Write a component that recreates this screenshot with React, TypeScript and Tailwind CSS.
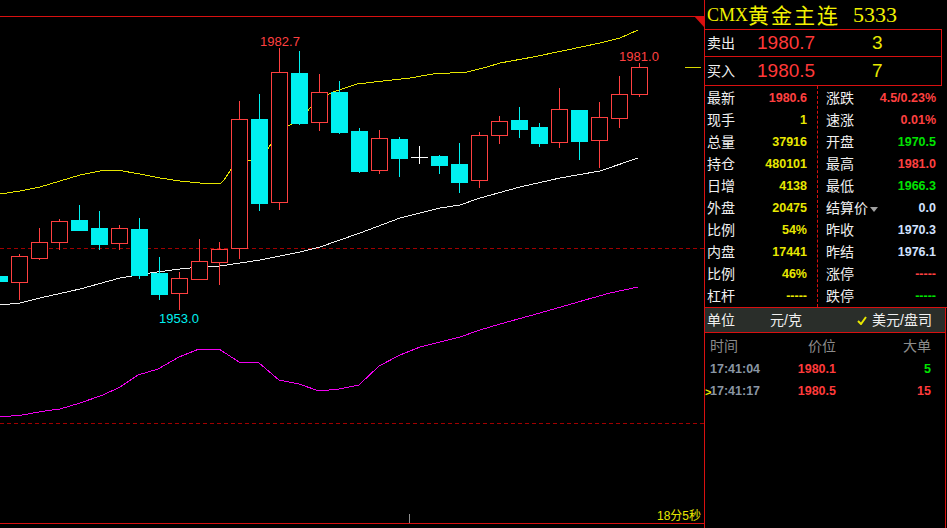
import React from 'react';

type Kind = 'r' | 'c' | 'x';

const RED = '#ff4040';
const CYAN = '#00f0f0';
const YEL = '#e8e800';
const GRN = '#00e400';
const BLU = '#d2e2ff';

// [bodyTop, bodyBottom, high, low, kind] in page pixels
const candles: [number, number, number, number, Kind][] = [
  [276, 281, 276, 282, 'c'],
  [256, 282, 254, 300, 'r'],
  [242, 258, 228, 260, 'r'],
  [221, 242, 219, 250, 'r'],
  [220, 230, 205, 230, 'c'],
  [228, 244, 211, 250, 'c'],
  [228, 243, 225, 250, 'r'],
  [229, 275, 218, 279, 'c'],
  [273, 294, 257, 300, 'c'],
  [278, 293, 272, 310, 'r'],
  [261, 279, 239, 279, 'r'],
  [249, 262, 242, 285, 'r'],
  [119, 248, 101, 259, 'r'],
  [119, 203, 94, 211, 'c'],
  [72, 202, 48, 210, 'r'],
  [73, 123, 51, 125, 'c'],
  [92, 122, 74, 131, 'r'],
  [92, 132, 81, 134, 'c'],
  [131, 171, 128, 173, 'c'],
  [138, 170, 130, 174, 'r'],
  [139, 158, 137, 177, 'c'],
  [157, 157, 146, 164, 'x'],
  [156, 165, 155, 174, 'c'],
  [164, 182, 143, 193, 'c'],
  [135, 180, 132, 188, 'r'],
  [121, 135, 116, 144, 'r'],
  [120, 129, 107, 138, 'c'],
  [127, 143, 123, 147, 'c'],
  [109, 142, 88, 148, 'r'],
  [110, 141, 110, 160, 'c'],
  [117, 140, 102, 168, 'r'],
  [94, 118, 76, 128, 'r'],
  [67, 94, 63, 97, 'r'],
];

const upper = [
  [0, 194], [20, 191], [40, 187], [60, 181], [80, 175], [100, 171], [117, 170], [140, 174],
  [160, 178], [180, 181], [200, 183], [220, 184], [224, 180], [232, 168], [237, 163], [247, 161],
  [258, 158], [267, 150], [280, 131], [290, 125], [300, 120], [310, 108], [320, 98], [333, 92],
  [357, 84], [383, 81], [410, 78], [433, 74], [467, 72], [487, 67], [500, 63], [533, 57],
  [567, 50], [600, 43], [620, 38], [638, 30],
];

const lower = [
  [0, 305], [20, 303], [40, 298], [80, 289], [120, 278], [150, 273], [180, 269], [200, 267],
  [220, 266], [240, 263], [260, 260], [290, 254], [300, 252], [320, 247], [360, 233], [400, 218],
  [440, 208], [460, 205], [480, 198], [520, 187], [560, 178], [600, 171], [638, 158],
];

const osc = [
  [0, 417], [22, 415], [45, 411], [60, 409], [80, 403], [103, 395], [120, 387], [138, 375],
  [158, 369], [179, 357], [199, 349], [219, 349], [239, 362], [259, 363], [279, 380], [299, 384],
  [319, 391], [339, 389], [359, 385], [379, 366], [400, 355], [420, 347], [440, 342], [460, 337],
  [480, 330], [500, 324], [540, 313], [585, 300], [610, 293], [638, 287],
];

const pts = (p: number[][]) => p.map((q) => q.join(',')).join(' ');

const leftStats: [string, string, string][] = [
  ['最新', '1980.6', RED],
  ['现手', '1', YEL],
  ['总量', '37916', YEL],
  ['持仓', '480101', YEL],
  ['日增', '4138', YEL],
  ['外盘', '20475', YEL],
  ['比例', '54%', YEL],
  ['内盘', '17441', YEL],
  ['比例', '46%', YEL],
  ['杠杆', '-----', YEL],
];

const rightStats: [string, string, string][] = [
  ['涨跌', '4.5/0.23%', RED],
  ['速涨', '0.01%', RED],
  ['开盘', '1970.5', GRN],
  ['最高', '1981.0', RED],
  ['最低', '1966.3', GRN],
  ['结算价', '0.0', BLU],
  ['昨收', '1970.3', BLU],
  ['昨结', '1976.1', BLU],
  ['涨停', '-----', RED],
  ['跌停', '-----', GRN],
];

function Chart() {
  return (
    <svg width={704} height={506} viewBox="0 17 704 506" className="block">
      <g shapeRendering="crispEdges">
        <line x1={0} x2={704} y1={248.5} y2={248.5} stroke="#a00000" strokeDasharray="4 3" />
        <line x1={0} x2={704} y1={423.5} y2={423.5} stroke="#a00000" strokeDasharray="4 3" />
        <polyline points={pts(upper)} fill="none" stroke="#e6e600" />
        <polyline points={pts(lower)} fill="none" stroke="#f0f0f0" />
        <polyline points={pts(osc)} fill="none" stroke="#f000f0" />
        <line x1={685} x2={701} y1={67.5} y2={67.5} stroke="#d8d800" />
        <line x1={409.5} x2={409.5} y1={514} y2={523} stroke="#909090" />
        {candles.map(([top, bot, hi, lo, kind], i) => {
          const left = -9 + i * 20;
          const cx = left + 8.5;
          if (kind === 'x') {
            return (
              <g key={i} stroke="#ffffff">
                <line x1={left} x2={left + 17} y1={top + 0.5} y2={top + 0.5} />
                <line x1={cx} x2={cx} y1={hi} y2={lo} />
              </g>
            );
          }
          const color = kind === 'r' ? RED : CYAN;
          return (
            <g key={i}>
              <line x1={cx} x2={cx} y1={hi} y2={lo} stroke={color} />
              {kind === 'r' ? (
                <rect x={left + 0.5} y={top + 0.5} width={16} height={bot - top} fill="#000" stroke={color} />
              ) : (
                <rect x={left} y={top} width={17} height={bot - top + 1} fill={color} />
              )}
            </g>
          );
        })}
      </g>
      <g fontFamily="'Liberation Sans', sans-serif" fontSize={13} textAnchor="middle">
        <text x={280} y={46} fill={RED}>1982.7</text>
        <text x={639} y={61} fill={RED}>1981.0</text>
        <text x={179} y={323} fill={CYAN}>1953.0</text>
      </g>
      <text
        x={701}
        y={520}
        textAnchor="end"
        fontSize={12}
        fill="#e8e800"
        fontFamily="'Liberation Sans', 'Noto Sans CJK SC', sans-serif"
      >
        18分5秒
      </text>
    </svg>
  );
}

function StatRow({ label, value, color, pl, pr, arrow }: { label: string; value: string; color: string; pl: string; pr: string; arrow?: boolean }) {
  return (
    <div className={`h-[22px] flex items-center justify-between ${pl} ${pr}`}>
      <span className="text-[14px] text-[#f0f0f0] flex items-center">
        {label}
        {arrow && (
          <svg width="8" height="5" viewBox="0 0 8 5" className="ml-[2px] mt-[2px]">
            <path d="M0 0 H8 L4 5 Z" fill="#a0a0a0" />
          </svg>
        )}
      </span>
      <span className="text-[12.5px] font-bold" style={{ color }}>
        {value}
      </span>
    </div>
  );
}

function Panel() {
  return (
    <div className="w-[243px] h-full border-l border-[#d81010] flex flex-col whitespace-nowrap">
      <div className="h-[29px] flex items-center pl-[2px] text-[#f2f200] leading-none">
        <span className="text-[18px] font-['Liberation_Serif',serif]">CMX</span>
        <span className="text-[21px] font-['Noto_Sans_CJK_SC',sans-serif] tracking-[2px]">黄金主连</span>
        <span className="ml-[13px] text-[22px] font-['Liberation_Serif',serif]">5333</span>
      </div>
      <div className="w-[237px] border-y border-r border-[#d81010]">
        <div className="h-[27px] flex items-center border-b border-[#d81010] pl-[2px]">
          <span className="w-[50px] text-[14px] text-[#f0f0f0]">卖出</span>
          <span className="w-[115px] text-[19px] text-[#ff3838]">1980.7</span>
          <span className="text-[19px] text-[#e8e800]">3</span>
        </div>
        <div className="h-[28px] flex items-center pl-[2px]">
          <span className="w-[50px] text-[14px] text-[#f0f0f0]">买入</span>
          <span className="w-[115px] text-[19px] text-[#ff3838]">1980.5</span>
          <span className="text-[19px] text-[#e8e800]">7</span>
        </div>
      </div>
      <div className="flex border-b border-[#d81010]">
        <div className="w-[112px] pt-[1px]">
          {leftStats.map(([l, v, c], i) => (
            <StatRow key={i} label={l} value={v} color={c} pl="pl-[2px]" pr="pr-[10px]" />
          ))}
        </div>
        <div className="flex-1 pt-[1px] border-l border-dashed border-[#d81010]">
          {rightStats.map(([l, v, c], i) => (
            <StatRow key={i} label={l} value={v} color={c} pl="pl-[8px]" pr="pr-[11px]" arrow={l === '结算价'} />
          ))}
        </div>
      </div>
      <div className="w-[241px] h-[25px] flex items-center bg-[#2a2e2a] border-b border-r border-[#d81010] text-[14px] text-[#f0f0f0] pl-[2px]">
        <span className="w-[63px]">单位</span>
        <span className="w-[87px]">元/克</span>
        <svg width="10" height="9" viewBox="0 0 10 9" className="mr-[5px]">
          <path d="M1 5 L4 8 L9 1" fill="none" stroke="#e8e800" strokeWidth="2" />
        </svg>
        <span>美元/盘司</span>
      </div>
      <div className="w-[241px] flex-1 border-r border-[#d81010]">
        <div className="h-[24px] flex items-end text-[14px] text-[#8c8c8c]">
          <span className="w-[5px]" />
          <span className="w-[80px]">时间</span>
          <span className="w-[46px] text-right">价位</span>
          <span className="w-[95px] text-right">大单</span>
        </div>
        <div className="h-[22px] flex items-end text-[12.5px] font-bold">
          <span className="w-[5px]" />
          <span className="w-[80px] text-[#8a96a4]">17:41:04</span>
          <span className="w-[46px] text-right text-[#ff3b3b]">1980.1</span>
          <span className="w-[95px] text-right text-[#00e400]">5</span>
        </div>
        <div className="h-[22px] flex items-end text-[12.5px] font-bold">
          <span className="w-[5px] text-[#e8e800] text-[11px] leading-[17px]">&gt;</span>
          <span className="w-[80px] text-[#8a96a4]">17:41:17</span>
          <span className="w-[46px] text-right text-[#ff3b3b]">1980.5</span>
          <span className="w-[95px] text-right text-[#ff3b3b]">15</span>
        </div>
      </div>
    </div>
  );
}

export default function App() {
  return (
    <div className="w-[947px] h-[528px] bg-black flex overflow-hidden font-['Liberation_Sans','Noto_Sans_CJK_SC',sans-serif]">
      <div className="w-[704px] h-full flex flex-col relative">
        <div className="h-[16px]" />
        <div className="flex-1 border-y border-[#d81010]">
          <Chart />
        </div>
        <div className="h-[4px]" />
        <svg width="10" height="11" viewBox="0 0 10 11" className="absolute right-0 top-[16px]">
          <path d="M0 0 H10 V11 Z" fill="#d81010" />
        </svg>
      </div>
      <Panel />
    </div>
  );
}
